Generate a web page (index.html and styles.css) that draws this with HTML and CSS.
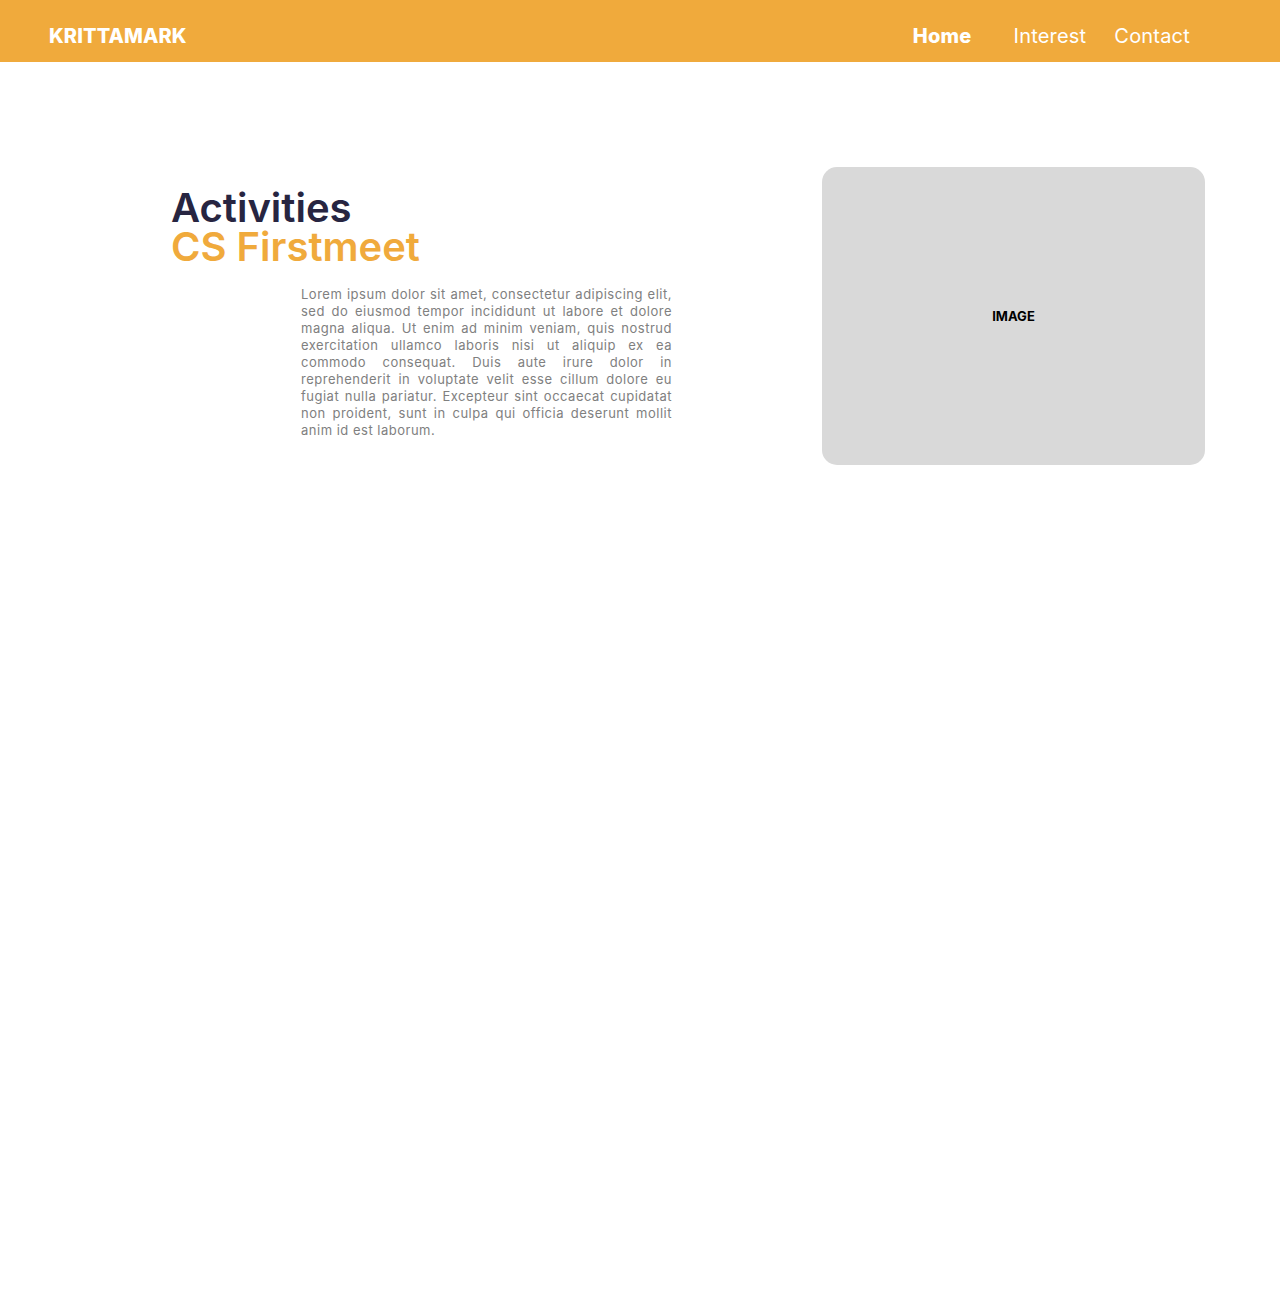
FILE: index.html
```html
<!DOCTYPE html>
<html lang="en">
<head>
<meta charset="utf-8">
<title>Krittamark</title>
<link rel="stylesheet" href="styles.css">
</head>
<body>
<header class="topbar">
  <div class="logo">KRITTAMARK</div>
  <nav class="nav">
    <a class="nav-link active" href="#">Home</a>
    <a class="nav-link" href="#">Interest</a>
    <a class="nav-link" href="#">Contact</a>
  </nav>
</header>
<main class="content">
  <section class="text-col">
    <h1 class="title"><span class="title-main">Activities</span><span class="title-sub">CS Firstmeet</span></h1>
    <p class="desc">Lorem ipsum dolor sit amet, consectetur adipiscing elit, sed do eiusmod tempor incididunt ut labore et dolore magna aliqua. Ut enim ad minim veniam, quis nostrud exercitation ullamco laboris nisi ut aliquip ex ea commodo consequat. Duis aute irure dolor in reprehenderit in voluptate velit esse cillum dolore eu fugiat nulla pariatur. Excepteur sint occaecat cupidatat non proident, sunt in culpa qui officia deserunt mollit anim id est laborum.</p>
  </section>
  <div class="image-box">IMAGE</div>
</main>
</body>
</html>
```
FILE: styles.css
```css
* { box-sizing: border-box; }
body {
  margin: 0;
  font-family: Inter, "Noto Sans", sans-serif;
  background: #fff;
}
.topbar {
  height: 62px;
  background: #F0AA3C;
  display: flex;
  align-items: center;
  justify-content: space-between;
  padding: 0 90px 0 49px;
}
.logo {
  color: #fff;
  font-weight: 800;
  font-size: 20px;
  letter-spacing: 0.1px;
  padding-top: 10px;
}
.nav {
  display: flex;
  align-items: center;
  padding-top: 10px;
}
.nav-link {
  color: #fff;
  text-decoration: none;
  font-size: 20px;
  font-weight: 400;
  letter-spacing: 0.2px;
  margin-left: 28px;
}
.nav-link.active {
  font-weight: 800;
  margin-right: 14px;
}
.content {
  display: flex;
  justify-content: space-between;
  align-items: flex-start;
  padding: 105px 75px 0 171px;
}
.text-col {
  padding-top: 21px;
}
.title {
  margin: 0;
  font-weight: 600;
  font-size: 40px;
  line-height: 39px;
  display: flex;
  flex-direction: column;
}
.title-main { color: #272541; }
.title-sub { color: #F0AA3C; }
.desc {
  margin: 20px 0 0 130px;
  width: 371px;
  font-size: 13px;
  line-height: 17px;
  letter-spacing: 0.5px;
  color: #808080;
  text-align: justify;
}
.image-box {
  width: 383px;
  height: 298px;
  border-radius: 15px;
  background: #D9D9D9;
  display: flex;
  align-items: center;
  justify-content: center;
  font-weight: 700;
  font-size: 13px;
  color: #000;
}
```
